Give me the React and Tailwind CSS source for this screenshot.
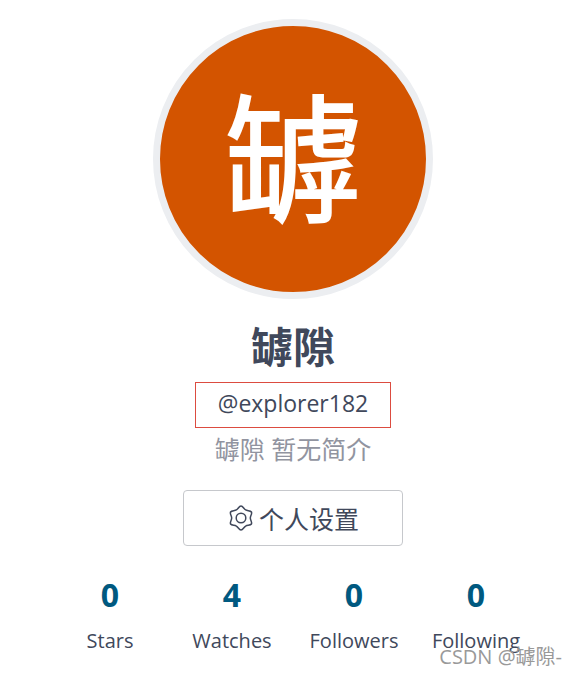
const stats = [
  { value: 0, label: 'Stars' },
  { value: 4, label: 'Watches' },
  { value: 0, label: 'Followers' },
  { value: 0, label: 'Following' },
];

function GearIcon() {
  return (
    <svg className="size-7" viewBox="0 0 28 28" fill="none" stroke="currentColor" strokeWidth="1.5" strokeLinejoin="round" aria-hidden="true">
      <path d="M14 2C16 2 16.75 4.85 18.65 5.95S23.4 6.27 24.4 8S23.3 11.8 23.3 14S25.4 18.27 24.4 20S20.55 20.95 18.65 22.05S16 26 14 26S11.25 23.15 9.35 22.05S4.6 21.73 3.6 20S4.7 16.2 4.7 14S2.6 9.73 3.6 8S7.45 7.05 9.35 5.95S12 2 14 2Z" />
      <circle cx="14" cy="14" r="4.8" />
    </svg>
  );
}

export default function App() {
  return (
    <main className="relative flex min-h-screen flex-col items-center bg-white pt-[19px] pl-2.5 text-[#40485b] font-['Open_Sans','Noto_Sans_CJK_SC',sans-serif]">
      <div className="flex size-[280px] items-center justify-center rounded-full border-[7px] border-[#eceef1] bg-[#d35400] pb-1 text-[138px] leading-none text-white [-webkit-text-stroke:2px_white]">罅</div>
      <h1 className="mt-5 text-[42px] leading-[56px] font-bold">罅隙</h1>
      <p className="mt-[7px] border border-[#dc4c40] px-[22px] pb-1 text-[23px] leading-10">@explorer182</p>
      <p className="mt-1 text-[25px] leading-[34px] text-[#9194a0]">罅隙 暂无简介</p>
      <button type="button" className="mt-6 flex h-14 w-[220px] items-center justify-center gap-1 rounded border border-[#c6c8cc] bg-white text-[25px]">
        <GearIcon />
        <span className="pt-1">个人设置</span>
      </button>
      <ul className="mt-[27px] grid w-[488px] grid-cols-4 text-center">
        {stats.map((s) => (
          <li key={s.label}>
            <a href="#stats" className="block">
              <strong className="block text-[32px] leading-11 font-bold text-[#005980]">{s.value}</strong>
              <span className="mt-2 block text-xl leading-8">{s.label}</span>
            </a>
          </li>
        ))}
      </ul>
      <span className="absolute right-3.5 bottom-[3px] text-xl leading-7 text-[#999]">CSDN @罅隙-</span>
    </main>
  );
}
